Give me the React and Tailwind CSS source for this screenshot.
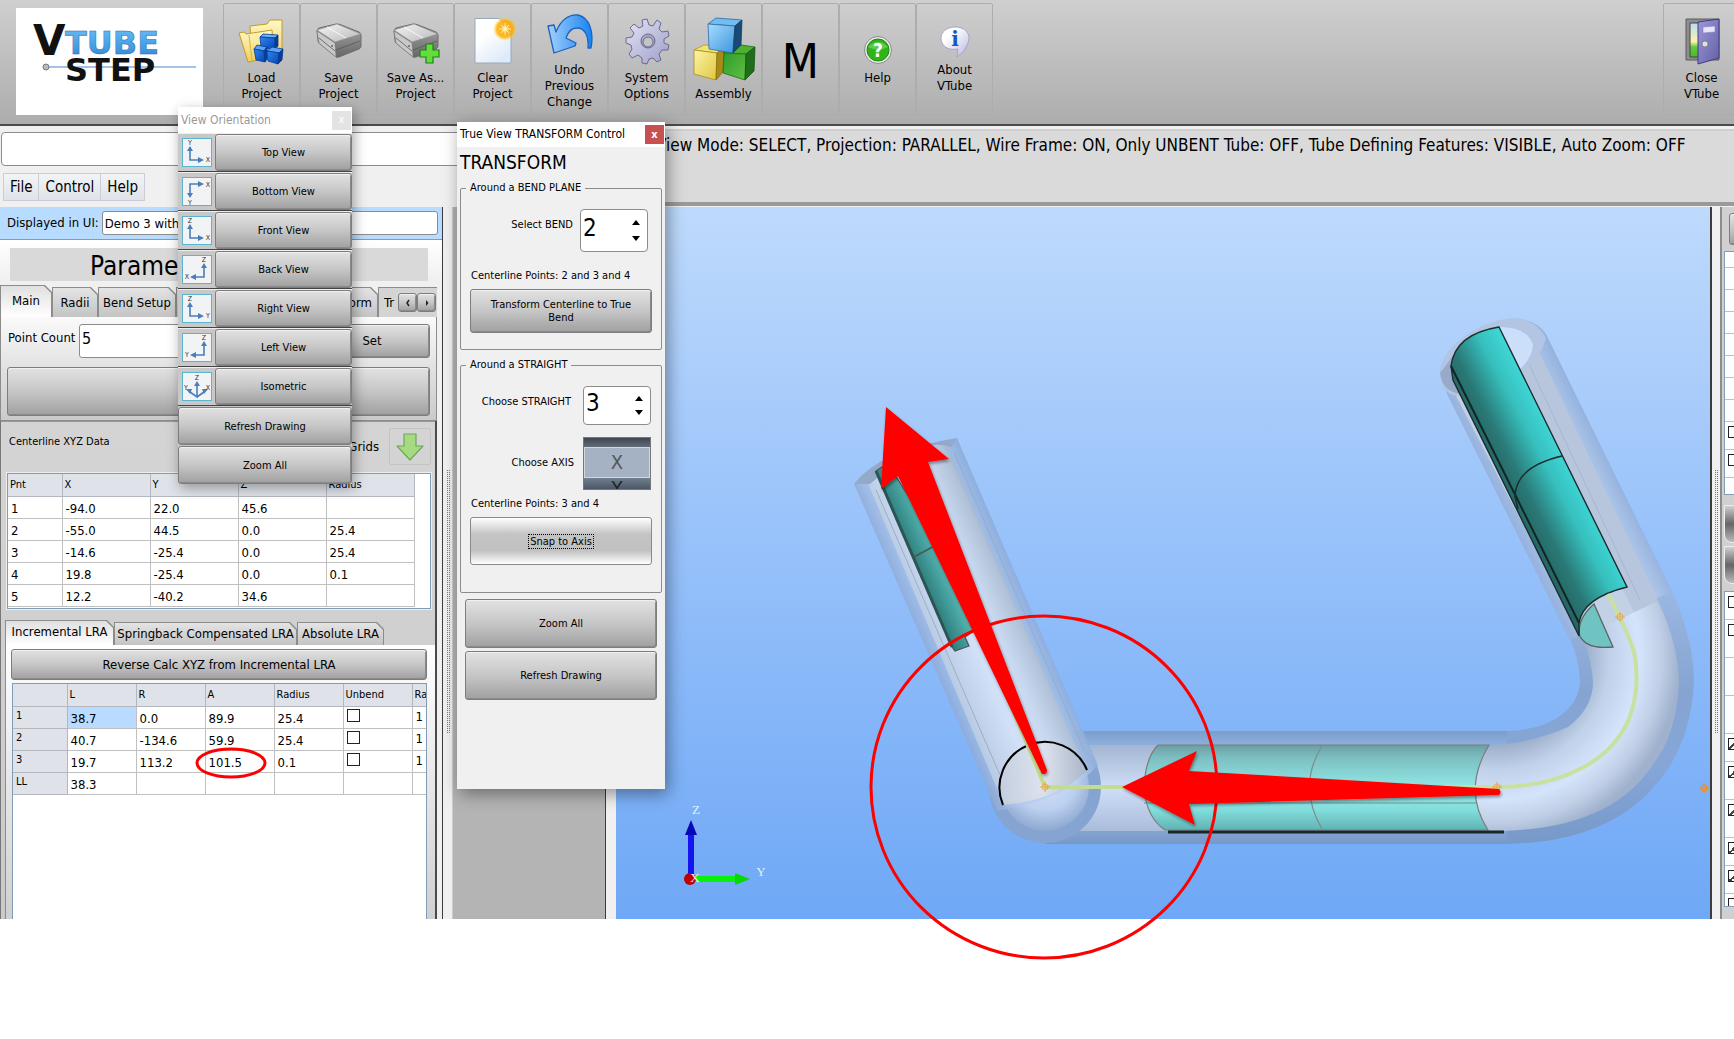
import React, { useState } from "react";

const BUTTON =
  "border border-[#7d7d7d] rounded-[3px] bg-linear-to-b from-[#e2e2e2] via-[#c6c6c6] to-[#a0a0a0] shadow-[inset_0_1px_0_#f0f0f0,inset_-1px_-1px_0_#8a8a8a]";

const xyzRows = [
  ["1", "-94.0", "22.0", "45.6", ""],
  ["2", "-55.0", "44.5", "0.0", "25.4"],
  ["3", "-14.6", "-25.4", "0.0", "25.4"],
  ["4", "19.8", "-25.4", "0.0", "0.1"],
  ["5", "12.2", "-40.2", "34.6", ""],
];

const lraRows = [
  ["1", "38.7", "0.0", "89.9", "25.4"],
  ["2", "40.7", "-134.6", "59.9", "25.4"],
  ["3", "19.7", "113.2", "101.5", "0.1"],
  ["LL", "38.3", "", "", ""],
];

const views = [
  { label: "Top View", corner: "bl", up: "Y", side: "X" },
  { label: "Bottom View", corner: "tl", up: "Y", side: "X" },
  { label: "Front View", corner: "bl", up: "Z", side: "X" },
  { label: "Back View", corner: "br", up: "Z", side: "X" },
  { label: "Right View", corner: "bl", up: "Z", side: "Y" },
  { label: "Left View", corner: "br", up: "Z", side: "Y" },
  { label: "Isometric", corner: "iso" },
];

/* ---------- icons ---------- */

const LoadIcon = () => (
  <svg viewBox="0 0 48 48" className="w-12 h-12" aria-hidden="true">
    <defs>
      <linearGradient id="folder" x1="0" y1="0" x2="0" y2="1">
        <stop offset="0" stopColor="#fff8c8" />
        <stop offset="1" stopColor="#f0cf5a" />
      </linearGradient>
      <linearGradient id="blueCube" x1="0" y1="0" x2="1" y2="1">
        <stop offset="0" stopColor="#2f86f2" />
        <stop offset="1" stopColor="#0546b0" />
      </linearGradient>
    </defs>
    <path d="M12 9 L29 7 L32 3 L44 3 L44 36 L14 42 Z" fill="url(#folder)" stroke="#c39a28" strokeLinejoin="round" />
    <path d="M1 16 L6 15 L8 17 L34 13 L36 40 L10 45 Z" fill="url(#folder)" stroke="#c39a28" strokeLinejoin="round" />
    <path d="M11 18 L14 43" stroke="#d8b440" />
    <g stroke="#063a92" strokeWidth="0.8" strokeLinejoin="round">
      <path d="M22 20 L25 17 L40 18 L37 21 Z" fill="#6fb2fb" />
      <path d="M22 20 L37 21 L37 32 L23 31 Z" fill="url(#blueCube)" />
      <path d="M37 21 L40 18 L40 29 L37 32 Z" fill="#053c9c" />
      <path d="M16 32 L19 28 L29 30 L26 34 Z" fill="#5ba2f6" />
      <path d="M16 32 L26 34 L27 45 L18 43 Z" fill="url(#blueCube)" />
      <path d="M26 34 L29 30 L29 42 L27 45 Z" fill="#053c9c" />
      <path d="M29 34 L34 30 L45 32 L41 36 Z" fill="#5ba2f6" />
      <path d="M29 34 L41 36 L40 47 L30 44 Z" fill="url(#blueCube)" />
      <path d="M41 36 L45 32 L44 43 L40 47 Z" fill="#053c9c" />
    </g>
  </svg>
);

const DriveIcon = ({ plus }) => (
  <svg viewBox="0 0 48 48" className="w-12 h-12" aria-hidden="true">
    <defs>
      <linearGradient id="driveTop" x1="0" y1="0" x2="1" y2="1">
        <stop offset="0" stopColor="#f4f4f4" />
        <stop offset="1" stopColor="#b9b9b9" />
      </linearGradient>
      <linearGradient id="driveSide" x1="0" y1="0" x2="0" y2="1">
        <stop offset="0" stopColor="#a8a8a8" />
        <stop offset="1" stopColor="#666" />
      </linearGradient>
    </defs>
    <path d="M2 14 Q2 12 4 11 L21 7 Q23 7 25 7.5 L44 15 Q46 16 46 18 L46 29 Q46 31 44 32 L24 40 Q21 41 20 39 L4 26 Q3 25 3 23 Z" fill="url(#driveSide)" stroke="#6d6d6d" />
    <path d="M2 13 L22 7 L46 17 L20 25 Z" fill="url(#driveTop)" stroke="#8a8a8a" strokeWidth="0.6" strokeLinejoin="round" />
    <path d="M2 14 L20 26 L21 40 L4 26 Z" fill="#c9c9c9" stroke="#787878" strokeWidth="0.6" strokeLinejoin="round" />
    <path d="M21 33 L45 24 M4 21 L20 34" stroke="#585858" strokeWidth="0.8" fill="none" />
    <path d="M12 10 L31 21" stroke="#fff" strokeWidth="0.8" />
    <circle cx="17" cy="29" r="1" fill="#666" />
    {plus && (
      <path d="M34 27 H41 V33 H47 V40 H41 V46 H34 V40 H28 V33 H34 Z" fill="#64dc3c" stroke="#1c8412" strokeWidth="1.2" />
    )}
  </svg>
);

const ClearIcon = () => (
  <svg viewBox="0 0 48 48" className="w-12 h-12" aria-hidden="true">
    <defs>
      <linearGradient id="sheet" x1="0" y1="0" x2="0.6" y2="1">
        <stop offset="0.4" stopColor="#fff" />
        <stop offset="1" stopColor="#dfeaf8" />
      </linearGradient>
      <radialGradient id="spark">
        <stop offset="0" stopColor="#fff7b0" />
        <stop offset="0.35" stopColor="#ffb41e" />
        <stop offset="0.7" stopColor="#ffa800" stopOpacity="0.8" />
        <stop offset="1" stopColor="#ffe600" stopOpacity="0" />
      </radialGradient>
    </defs>
    <path d="M6 1.5 H30 L42 13 V46 H6 Z" fill="url(#sheet)" stroke="#98a8bc" />
    <circle cx="36" cy="12" r="12" fill="url(#spark)" />
    <path d="M36 6 V18 M30 12 H42 M32 8 L40 16 M40 8 L32 16" stroke="#fff6c8" strokeWidth="0.8" />
  </svg>
);

const UndoIcon = () => (
  <svg viewBox="0 0 48 48" className="w-12 h-12" aria-hidden="true">
    <defs>
      <linearGradient id="undo" x1="0" y1="0" x2="1" y2="0">
        <stop offset="0" stopColor="#a4d0fb" />
        <stop offset="1" stopColor="#1583f2" />
      </linearGradient>
    </defs>
    <path d="M2 17 L8 16 L10 23 C15 10 24 5 32 6 C44 9 48 23 45 39 L42 39 C43 27 39 19 31 19 C26 19 22 23 20 29 L30 34 L29 37 L8 44 Z" fill="url(#undo)" stroke="#1e62bb" strokeWidth="1.3" strokeLinejoin="round" />
  </svg>
);

const GearIcon = () => (
  <svg viewBox="0 0 48 48" className="w-12 h-12" aria-hidden="true">
    <defs>
      <linearGradient id="gear" x1="0" y1="0" x2="1" y2="1">
        <stop offset="0" stopColor="#e4e4f6" />
        <stop offset="1" stopColor="#9d9dc8" />
      </linearGradient>
    </defs>
    <g fill="url(#gear)" stroke="#6a6a92" strokeWidth="1">
      <path
        strokeLinejoin="round"
        d="M20 9 L19 3 L24 2 L26 8 L30 9 L34 3 L38 6 L36 12 L39 15 L45 14 L46 19 L41 22 L41 26 L46 28 L45 33 L39 33 L36 37 L38 43 L34 45 L30 41 L26 42 L24 47 L19 46 L19 41 L15 38 L9 41 L6 37 L9 32 L8 28 L3 26 L3 21 L9 20 L11 16 L7 11 L11 7 L16 11 Z"
      />
      <circle cx="25" cy="24" r="7" fill="#a9a9c2" />
      <circle cx="25" cy="25" r="5" fill="#c4c4c4" />
    </g>
  </svg>
);

const AssemblyIcon = () => (
  <svg viewBox="0 0 64 64" className="w-16 h-16" aria-hidden="true">
    <defs>
      <linearGradient id="asmBlue" x1="0" y1="0" x2="1" y2="1">
        <stop offset="0" stopColor="#a8dcff" />
        <stop offset="1" stopColor="#3b95dd" />
      </linearGradient>
      <linearGradient id="asmYellow" x1="0" y1="0" x2="1" y2="1">
        <stop offset="0" stopColor="#fdf4a8" />
        <stop offset="1" stopColor="#e0c63e" />
      </linearGradient>
      <linearGradient id="asmGreen" x1="0" y1="0" x2="1" y2="1">
        <stop offset="0" stopColor="#2e9c2c" />
        <stop offset="1" stopColor="#62c042" />
      </linearGradient>
    </defs>
    <g strokeLinejoin="round" strokeWidth="0.8">
      <path d="M2 33 L12 28 L32 29 L25 36 Z" fill="#f4e46c" stroke="#b0952a" />
      <path d="M2 33 L25 36 L24 63 L2 57 Z" fill="url(#asmYellow)" stroke="#a98c22" />
      <path d="M25 36 L32 29 L31 55 L24 63 Z" fill="#a88a18" stroke="#8a7010" />
      <path d="M31 36 L42 27 L63 30 L54 37 Z" fill="#4fae34" stroke="#1e6e18" />
      <path d="M32 36 L54 37 L53 63 L31 56 Z" fill="url(#asmGreen)" stroke="#1e6e18" />
      <path d="M54 37 L63 30 L62 54 L53 63 Z" fill="#1f6e1a" stroke="#165412" />
      <path d="M16 7 L24 1 L50 3 L43 9 Z" fill="#74bdf2" stroke="#276ca6" />
      <path d="M16 7 L43 9 L41 36 L17 32 Z" fill="url(#asmBlue)" stroke="#276ca6" />
      <path d="M43 9 L50 3 L49 28 L41 36 Z" fill="#174b76" stroke="#123e62" />
    </g>
  </svg>
);

const HelpIcon = () => (
  <svg viewBox="0 0 32 32" className="w-8 h-8" aria-hidden="true">
    <circle cx="16" cy="17" r="13.5" fill="#e8e8e8" stroke="#8c8c8c" />
    <circle cx="16" cy="17" r="11" fill="#2fb51a" stroke="#1b8c0c" />
    <path d="M6 14 Q16 4 26 14 Q16 19 6 14" fill="#7fdc6a" opacity="0.6" />
    <text x="16" y="24" textAnchor="middle" fontSize="19" fontWeight="700" fill="#fff">?</text>
  </svg>
);

const AboutIcon = () => (
  <svg viewBox="0 0 32 32" className="w-8 h-8" aria-hidden="true">
    <defs>
      <linearGradient id="bubble" x1="0" y1="0" x2="1" y2="1">
        <stop offset="0.3" stopColor="#fff" />
        <stop offset="1" stopColor="#b6b6e2" />
      </linearGradient>
    </defs>
    <path d="M16 2 C25 2 30 7 30 13 C30 18 27 22 25 26 L18 32 L19 24 C8 26 2 20 2 13 C2 7 8 2 16 2 Z" fill="url(#bubble)" stroke="#9c9cc0" strokeWidth="0.8" />
    <text x="16" y="21" textAnchor="middle" fontSize="20" fontWeight="700" fill="#1457c8" fontFamily="DejaVu Serif">i</text>
  </svg>
);

const DoorIcon = () => (
  <svg viewBox="0 0 48 48" className="w-12 h-12" aria-hidden="true">
    <defs>
      <linearGradient id="sky" x1="0" y1="0" x2="0" y2="1">
        <stop offset="0" stopColor="#b6dcfa" />
        <stop offset="0.55" stopColor="#fff3a8" />
        <stop offset="0.7" stopColor="#62cc3c" />
        <stop offset="1" stopColor="#48b82a" />
      </linearGradient>
      <linearGradient id="door" x1="0" y1="0" x2="1" y2="1">
        <stop offset="0" stopColor="#9c98d8" />
        <stop offset="1" stopColor="#6460a6" />
      </linearGradient>
    </defs>
    <path d="M8 2 H41 V43 H8 Z" fill="#8d8d8d" stroke="#5c5c5c" />
    <path d="M12 6 H24 V40 H12 Z" fill="url(#sky)" stroke="#444" />
    <path d="M20 5 L41 2 V41 L20 47 Z" fill="url(#door)" stroke="#403c80" />
    <path d="M25 10 L37 9 V15 L25 16 Z" fill="#e6e6fb" stroke="#8480c0" strokeWidth="0.6" />
    <circle cx="27" cy="27" r="3" fill="#e0e0e0" stroke="#77767c" strokeWidth="0.8" />
  </svg>
);

const ViewIcon = ({ corner, up, side }) => (
  <svg viewBox="0 0 30 29" className="w-[30px] h-[29px]" aria-hidden="true">
    <rect x="0.5" y="0.5" width="29" height="28" fill="#f2f3f5" stroke="#5ab3cf" />
    <g stroke="#4a7ebb" strokeWidth="1.6" fill="none">
      {corner === "bl" && <path d="M8 11 V22 H18" />}
      {corner === "tl" && <path d="M8 17 V7 H18" />}
      {corner === "br" && <path d="M22 11 V22 H12" />}
      {corner === "iso" && <path d="M15 13 V25 L8 20 M15 25 L22 20" />}
    </g>
    <g fill="#4a7ebb">
      {corner === "bl" && <path d="M8 8 L5 13 H11 Z M22 22 L16 19 V25 Z" />}
      {corner === "tl" && <path d="M8 21 L5 16 H11 Z M22 7 L16 4 V10 Z" />}
      {corner === "br" && <path d="M22 8 L19 13 H25 Z M8 22 L14 19 V25 Z" />}
      {corner === "iso" && <path d="M15 9 L12 14 H18 Z M4 17 L10 17 L8 22 Z M26 17 L20 17 L22 22 Z" />}
    </g>
    <g fontSize="7" fill="#333" textAnchor="middle">
      {corner === "bl" && <><text x="8" y="7">{up}</text><text x="26" y="24">{side}</text></>}
      {corner === "tl" && <><text x="8" y="28">{up}</text><text x="26" y="10">{side}</text></>}
      {corner === "br" && <><text x="22" y="7">{up}</text><text x="5" y="24">{side}</text></>}
      {corner === "iso" && <><text x="15" y="8">Z</text><text x="4" y="18">Y</text><text x="26" y="18">X</text></>}
    </g>
  </svg>
);

const Target = ({ x, y, faded }) => (
  <g transform={`translate(${x} ${y})`} stroke="#ff8a10" strokeWidth="1.2" fill="none" opacity={faded ? 0.6 : 1}>
    <circle r="3" />
    <path d="M-5 0 H5 M0 -5 V5" />
  </g>
);

/* ---------- toolbar ---------- */

const tools = [
  { Icon: LoadIcon, lines: ["Load", "Project"] },
  { Icon: DriveIcon, lines: ["Save", "Project"] },
  { Icon: () => <DriveIcon plus />, lines: ["Save As...", "Project"] },
  { Icon: ClearIcon, lines: ["Clear", "Project"] },
  { Icon: UndoIcon, lines: ["Undo", "Previous", "Change"] },
  { Icon: GearIcon, lines: ["System", "Options"] },
  { Icon: AssemblyIcon, lines: ["Assembly"] },
  { lines: ["M"], big: true },
  { Icon: HelpIcon, lines: ["Help"] },
  { Icon: AboutIcon, lines: ["About", "VTube"] },
  { Icon: DoorIcon, lines: ["Close", "VTube"], last: true },
];

const ToolButton = ({ Icon, lines, big, last }) => (
  <button
    className={`w-[77px] h-28 shrink-0 flex flex-col items-center justify-center gap-[5px] border border-[#adadad] rounded-[2px] ${
      last ? "ml-auto -mr-[6px]" : ""
    }`}
  >
    {Icon && <Icon />}
    <span className={big ? "pt-1 text-5xl" : "text-[13px] leading-4"}>
      {lines.map((line) => (
        <span key={line} className="block">{line}</span>
      ))}
    </span>
  </button>
);

const Toolbar = () => (
  <header className="flex items-start h-[126px] pt-[3px] pl-4 overflow-hidden bg-linear-to-b from-[#cfcfcf] to-[#adadad] border-b-2 border-[#4a4a4a]">
    <div className="w-[187px] h-[107px] mt-[5px] mr-5 shrink-0 bg-white">
      <svg viewBox="16 8 187 107" className="w-full h-full" role="img" aria-label="VTube Step">
        <defs>
          <linearGradient id="logoBlue" x1="0" y1="0" x2="0" y2="1">
            <stop offset="0" stopColor="#6fc0f8" />
            <stop offset="1" stopColor="#2a86d2" />
          </linearGradient>
        </defs>
        <path d="M47 67 H196" stroke="#4a86c8" />
        <circle cx="46" cy="67" r="3" fill="#bbb" stroke="#777" />
        <g fontFamily="DejaVu Sans" fontWeight="700">
          <text x="33" y="55" fontSize="42" fill="#111">V</text>
          <text x="65" y="54" fontSize="32" fill="url(#logoBlue)" stroke="#2a6aa8" strokeWidth="0.5">TUBE</text>
          <text x="65" y="81" fontSize="32" fill="#111">STEP</text>
        </g>
      </svg>
    </div>
    {tools.map((tool) => (
      <ToolButton key={tool.lines.join(" ")} {...tool} />
    ))}
  </header>
);

/* ---------- left panel ---------- */

const CUT = "[clip-path:polygon(0_0,calc(100%-7px)_0,100%_7px,100%_100%,0_100%)]";

const Tab = ({ label, active, className = "" }) => (
  <button
    role="tab"
    aria-selected={!!active}
    className={`bg-[#8c8c8c] pt-px px-px shrink-0 ${CUT} ${active ? "" : "mt-[2px]"} ${className}`}
  >
    <span
      className={`flex h-full items-center justify-center whitespace-nowrap ${CUT} ${
        active ? "pb-[2px] bg-linear-to-b from-[#e0e0e0] to-white" : "bg-linear-to-b from-[#e4e4e4] to-[#c4c4c4]"
      }`}
    >
      {label}
    </span>
  </button>
);

const XyzTable = () => (
  <div className="ml-[5px] mr-1 mt-2 h-[136px] border border-[#7f9db9] bg-white shadow-[0_0_0_1px_#eee]">
    <table className="table-fixed w-[406px] border-collapse">
      <thead>
        <tr className="h-[22px] bg-[#dfe3e9] text-[11px] text-left">
          <th className="w-[54px] font-normal border-r border-b border-[#b4b8be] pl-[2px]">Pnt</th>
          {["X", "Y", "Z", "Radius"].map((name) => (
            <th key={name} className="w-22 font-normal border-r border-b border-[#b4b8be] pl-[2px]">{name}</th>
          ))}
        </tr>
      </thead>
      <tbody>
        {xyzRows.map((row) => (
          <tr key={row[0]} className="h-[22px]">
            {row.map((value, i) => (
              <td key={i} className="border-r border-b border-[#c0c0c0] pl-[3px] pt-[2px] leading-[19px]">{value}</td>
            ))}
          </tr>
        ))}
      </tbody>
    </table>
  </div>
);

const LraTable = () => (
  <div className="flex-1 mt-[3px] ml-[6px] mr-2 border-x border-t border-[#7f9db9] bg-white overflow-hidden">
    <table className="table-fixed w-[468px] border-collapse">
      <thead>
        <tr className="h-[22px] bg-[#dfe3e9] text-[11px] text-left">
          <th className="w-[54px] border-r border-b border-[#b4b8be]"></th>
          {["L", "R", "A", "Radius", "Unbend", "Ratio"].map((name) => (
            <th key={name} className="w-[69px] font-normal border-r border-b border-[#b4b8be] pl-[2px]">{name}</th>
          ))}
        </tr>
      </thead>
      <tbody>
        {lraRows.map(([name, ...values], r) => (
          <tr key={name} className="h-[22px]">
            <th className="bg-[#dfe3e9] text-[11px] text-left font-normal border-r border-b border-[#b4b8be] pl-[3px] pb-[2px] leading-4">{name}</th>
            {values.map((value, i) => (
              <td
                key={i}
                className={`relative border-r border-b border-[#c0c0c0] pl-[3px] pt-[2px] leading-[19px] ${r === 0 && i === 0 ? "bg-[#b8dbff]" : ""}`}
              >
                {value}
                {value === "101.5" && (
                  <svg viewBox="0 0 72 32" className="absolute -left-[10px] -top-[4px] w-[72px] h-8 overflow-visible" aria-hidden="true">
                    <ellipse cx="35" cy="16" rx="34" ry="14" fill="none" stroke="#f00" strokeWidth="3" />
                  </svg>
                )}
              </td>
            ))}
            <td className="border-r border-b border-[#c0c0c0] pl-[3px] pb-[3px]">
              {name !== "LL" && (
                <input type="checkbox" aria-label={`Unbend ${name}`} className="block appearance-none w-[13px] h-[13px] border border-[#222] bg-white" />
              )}
            </td>
            <td className="border-r border-b border-[#c0c0c0] pl-[3px]">{name !== "LL" ? "1" : ""}</td>
          </tr>
        ))}
      </tbody>
    </table>
  </div>
);

const LeftPanel = () => (
  <section className="w-[443px] shrink-0 flex flex-col border-r border-[#3c3c3c] bg-[#f0f0f0]">
    <div className="flex items-center h-[33px] pl-[7px] pr-1 gap-[3px] bg-[#b8dcff] border-b border-[#8a9aaa]">
      <label htmlFor="displayed" className="whitespace-nowrap text-[13px]">Displayed in UI:</label>
      <input
        id="displayed"
        defaultValue="Demo 3 with"
        className="flex-1 min-w-0 h-6 px-[2px] bg-white border border-[#8c8c8c] rounded-[3px]"
      />
    </div>
    <div className="bg-linear-to-b from-white to-[#f0f0f0] pt-2 pl-[10px] pr-[14px]">
      <h1 className="h-[33px] pl-20 text-[26px] leading-9 bg-[#d9d9d9]">Parameters</h1>
    </div>

    <div role="tablist" className="flex h-8 mt-1 mr-[5px] overflow-hidden bg-[#f0f0f0]">
      <Tab label="Main" active className="w-[52px]" />
      <Tab label="Radii" className="w-[46px]" />
      <Tab label="Bend Setup" className="w-[78px]" />
      <Tab label="Bend Data" className="w-[90px]" />
      <Tab label="Transform" className="w-[112px] [&>span]:justify-end [&>span]:pr-[5px]" />
      <div className="flex-1 flex items-center mt-[2px] pl-[5px] bg-[#d4d4d4] border-t border-l border-[#8c8c8c]">
        <span className="w-[14px] overflow-hidden">Tr</span>
        <button aria-label="Scroll left" className={`w-[19px] h-[19px] flex items-center justify-center ${BUTTON}`}>
          <svg viewBox="0 0 8 8" className="w-2 h-2"><path d="M5 1 L3 4 L5 7" fill="none" stroke="#222" strokeWidth="1.5" /></svg>
        </button>
        <button aria-label="Scroll right" className={`w-[19px] h-[19px] flex items-center justify-center ${BUTTON}`}>
          <svg viewBox="0 0 8 8" className="w-2 h-2"><path d="M3 1 L5.5 4 L3 7 Z" fill="#222" /></svg>
        </button>
      </div>
    </div>
    <div className="mr-[5px] border border-t-0 border-[#8c8c8c] pt-[7px] pb-1 px-[6px] bg-linear-to-b from-[#fafafa] to-[#cacaca]">
      <div className="flex items-center">
        <label htmlFor="points" className="w-[72px] pl-px pb-[6px] text-[13px] whitespace-nowrap">Point Count</label>
        <input id="points" defaultValue="5" className="w-[220px] h-[34px] pl-[2px] pb-[5px] text-base bg-white border border-[#8c8c8c] rounded-[3px]" />
        <button className={`ml-auto w-[116px] h-[34px] text-[13px] ${BUTTON}`}>Set</button>
      </div>
      <button aria-label="Apply" className={`block mt-[9px] w-full h-[49px] ${BUTTON}`}></button>
    </div>

    <div className="flex-1 flex flex-col border-l border-[#777] mr-[5px] border-r-2 border-r-[#4a4a4a] bg-linear-to-b from-[#d4d4d4] to-[#cacaca] min-h-0">
      <div className="flex-none border-t border-[#999] pl-px">
        <div className="flex items-center justify-between pt-[6px] pl-[7px] pr-1">
          <span className="pb-2 text-[11px]">Centerline XYZ Data</span>
          <div className="flex items-center gap-[10px] text-[13px]">
            <span>Grids</span>
            <button aria-label="Export grids" className="w-[42px] h-[37px] flex items-center justify-center border border-[#c4c4c4] rounded-[2px]">
              <svg viewBox="0 0 28 28" className="w-7 h-7">
                <path d="M8 1 H20 V13 H27 L14 27 L1 13 H8 Z" fill="#a5d982" stroke="#6fa75a" strokeWidth="1.2" strokeLinejoin="round" />
              </svg>
            </button>
          </div>
        </div>
        <XyzTable />
      </div>

      <div role="tablist" className="flex-none flex h-[25px] mt-[11px] ml-1 text-[13px]">
        <Tab label="Incremental LRA" active className="w-[109px]" />
        <Tab label="Springback Compensated LRA" className="w-[183px]" />
        <Tab label="Absolute LRA" className="w-[87px]" />
      </div>
      <div className="flex-1 flex flex-col ml-1 pt-1 border-l border-[#8c8c8c] bg-linear-to-b from-white to-[#d0d0d0] min-h-0">
        <button className={`ml-[5px] mr-2 h-[31px] ${BUTTON}`}>Reverse Calc XYZ from Incremental LRA</button>
        <LraTable />
      </div>
    </div>
  </section>
);

/* ---------- 3D view ---------- */

const TubeScene = () => (
  <svg viewBox="616 207 1094 712" className="block w-full overflow-visible" role="img" aria-label="Tube model">
    <defs>
      <linearGradient id="bg" x1="0" y1="0" x2="0" y2="1">
        <stop offset="0" stopColor="#bedafc" />
        <stop offset="0.5" stopColor="#95c0fa" />
        <stop offset="1" stopColor="#6fa8f6" />
      </linearGradient>
      <linearGradient id="legOuter" gradientUnits="userSpaceOnUse" x1="922" y1="640" x2="1030" y2="592">
        <stop offset="0" stopColor="#8fabd8" />
        <stop offset="0.2" stopColor="#b3cbef" />
        <stop offset="0.7" stopColor="#bcd2f0" />
        <stop offset="1" stopColor="#84a4d6" />
      </linearGradient>
      <linearGradient id="legInner" gradientUnits="userSpaceOnUse" x1="920" y1="640" x2="1018" y2="597">
        <stop offset="0" stopColor="#b4c5dd" />
        <stop offset="0.45" stopColor="#d5e3f8" />
        <stop offset="0.7" stopColor="#cbdaf0" />
        <stop offset="0.92" stopColor="#b2c1d6" />
        <stop offset="1" stopColor="#9aabc4" />
      </linearGradient>
      <linearGradient id="flatOuter" gradientUnits="userSpaceOnUse" x1="0" y1="731" x2="0" y2="844">
        <stop offset="0" stopColor="#7a9dcc" />
        <stop offset="0.15" stopColor="#92b3e2" />
        <stop offset="0.6" stopColor="#a4bfe6" />
        <stop offset="1" stopColor="#7799c8" />
      </linearGradient>
      <linearGradient id="bendOuter" gradientUnits="userSpaceOnUse" x1="0" y1="590" x2="0" y2="844">
        <stop offset="0" stopColor="#9bb7e2" />
        <stop offset="0.4" stopColor="#86a4d2" />
        <stop offset="0.7" stopColor="#85a6d8" />
        <stop offset="1" stopColor="#7799c8" />
      </linearGradient>
      <linearGradient id="flatInner" gradientUnits="userSpaceOnUse" x1="0" y1="745" x2="0" y2="831">
        <stop offset="0" stopColor="#a3b5d1" />
        <stop offset="0.5" stopColor="#cfdff8" />
        <stop offset="1" stopColor="#a9bcda" />
      </linearGradient>
      <linearGradient id="rightOuter" gradientUnits="userSpaceOnUse" x1="1500" y1="505" x2="1605" y2="452">
        <stop offset="0" stopColor="#93b0dc" />
        <stop offset="0.2" stopColor="#abc4e8" />
        <stop offset="0.8" stopColor="#b3c9e8" />
        <stop offset="1" stopColor="#94b2df" />
      </linearGradient>
      <radialGradient id="bend" gradientUnits="userSpaceOnUse" cx="1496" cy="656" r="184">
        <stop offset="0.48" stopColor="#9baec9" />
        <stop offset="0.62" stopColor="#c1d1ea" />
        <stop offset="0.78" stopColor="#d4e4fb" />
        <stop offset="0.9" stopColor="#c0cfe6" />
        <stop offset="1" stopColor="#9fb1cd" />
      </radialGradient>
      <linearGradient id="tealBig" gradientUnits="userSpaceOnUse" x1="1508" y1="492" x2="1570" y2="460">
        <stop offset="0" stopColor="#236866" />
        <stop offset="0.25" stopColor="#2a7a77" />
        <stop offset="0.65" stopColor="#36bfbd" />
        <stop offset="1" stopColor="#40dada" />
      </linearGradient>
      <linearGradient id="tealFlat" gradientUnits="userSpaceOnUse" x1="0" y1="745" x2="0" y2="831">
        <stop offset="0" stopColor="#6c9ea2" />
        <stop offset="0.15" stopColor="#7cbfc2" />
        <stop offset="0.5" stopColor="#92e8e6" />
        <stop offset="0.75" stopColor="#82dedc" />
        <stop offset="1" stopColor="#5fb1b1" />
      </linearGradient>
      <linearGradient id="tealLeg" gradientUnits="userSpaceOnUse" x1="914" y1="560" x2="945" y2="546">
        <stop offset="0" stopColor="#2f7f7d" />
        <stop offset="1" stopColor="#63cbc7" />
      </linearGradient>
      <radialGradient id="ball" cx="0.5" cy="0.4" r="0.6">
        <stop offset="0" stopColor="#d5e3f8" />
        <stop offset="0.6" stopColor="#bcd0f0" />
        <stop offset="1" stopColor="#8ea8d0" />
      </radialGradient>
      <linearGradient id="cap" x1="0" y1="0" x2="1" y2="0">
        <stop offset="0" stopColor="#c4cedd" />
        <stop offset="0.5" stopColor="#dfe3ec" />
        <stop offset="1" stopColor="#a9b3c4" />
      </linearGradient>
      <filter id="shade" x="-10%" y="-10%" width="120%" height="120%">
        <feDropShadow dx="1" dy="2" stdDeviation="1.5" floodOpacity="0.4" />
      </filter>
    </defs>
    <rect x="616" y="207" width="1094" height="712" fill="url(#bg)" />

    {/* outer skin: straight, bend and right leg */}
    <path d="M1045 731 H1508 V844 H1045 Z" fill="url(#flatOuter)" />
    <path
      d="M1507 731 Q1545 730 1565 712 Q1580 698 1580 680 Q1578 655 1570 639 L1672 591 Q1694 640 1694 683 Q1690 745 1658 782 Q1610 842 1507 844 Z"
      fill="url(#bendOuter)"
    />
    <path d="M1447 394 L1440 373 Q1442 350 1470 333 Q1490 320 1513 318 Q1536 319 1546 334 L1672 591 L1570 640 Z" fill="url(#rightOuter)" />

    {/* inner skin */}
    <path d="M1045 745 H1490 V831 H1045 Z" fill="url(#flatInner)" />
    <path d="M1453 390 L1533 340 L1658 602 L1584 641 Z" fill="#c3d1e7" />
    <path d="M1533 340 L1658 602 L1634 612 L1512 372 Z" fill="#b7c6dc" />
    <path
      d="M1488 745 Q1530 744 1568 727 Q1593 708 1593 682 Q1592 660 1582 637 L1658 601 Q1679 645 1679 684 Q1676 735 1654 763 Q1612 829 1500 831 L1488 831 Q1462 788 1488 745 Z"
      fill="url(#bend)"
    />
    <path d="M1528 362 L1640 600 M1518 370 L1628 588" stroke="#a4b3ca" strokeWidth="0.8" />

    {/* open end, right leg */}
    <path d="M1440 373 Q1442 350 1470 333 Q1490 320 1513 318 Q1536 319 1546 338 Q1540 365 1500 385 Q1455 405 1443 388 Z" fill="#b2c5e2" />
    <path d="M1451 373 Q1455 345 1499 327 Q1528 327 1533 345 Q1532 362 1512 375 Q1470 400 1451 373 Z" fill="#cbdefa" />
    <path d="M1440 373 Q1442 392 1462 394 L1452 372 L1456 352 Z" fill="#97aacb" />
    <path d="M1594 604 L1613 647 Q1585 650 1579 634 Q1578 618 1594 604 Z" fill="#6fc4c2" stroke="#5c6464" strokeWidth="1.3" />
    <path d="M1499 327 L1627 587 Q1583 598 1579 623 L1579 636 L1453 380 L1451 366 Q1455 334 1499 327 Z" fill="url(#tealBig)" stroke="#1d2b2b" strokeWidth="1.4" />
    <path d="M1451 366 L1579 623" stroke="#142424" strokeWidth="2" />
    <path d="M1562 456 Q1515 467 1515 497 L1518 509" fill="none" stroke="#1d2b2b" strokeWidth="1.4" />

    {/* cut section, straight */}
    <path d="M1158 745 H1489 Q1462 790 1488 830 H1165 Q1147 818 1144 789 Q1145 758 1158 745 Z" fill="url(#tealFlat)" stroke="#7c7c7c" strokeWidth="1.2" />
    <path d="M1144 803 H1476 M1322 746 Q1297 786 1322 829" stroke="#7d8c8c" strokeWidth="1.2" fill="none" />
    <path d="M1168 832 H1504" stroke="#182828" strokeWidth="3" />

    {/* centerline */}
    <path
      d="M1045 787 H1499 Q1546 787 1582 768 Q1616 750 1629 719 Q1641 688 1634 652 Q1628 632 1608 594"
      fill="none"
      stroke="#c8e0a0"
      strokeWidth="4"
    />

    {/* left leg and the ball joint */}
    <circle cx="1045" cy="787" r="56" fill="#85a4d2" />
    <circle cx="1045" cy="787" r="44" fill="url(#ball)" />
    <path d="M854 484 Q885 455 957 438 L1098 765 Q1070 798 997 811 Z" fill="url(#legOuter)" opacity="0.85" />
    <path d="M867 481 Q895 456 946 444 L1082 760 Q1060 795 1003 803 Z" fill="url(#legInner)" opacity="0.9" />
    <path d="M854 484 Q880 450 957 438 L951 447 Q930 440 905 455 L870 484 Z" fill="#93a9c8" />
    <path d="M876 490 L1000 775 M954 452 L1084 750" stroke="#9aa9bf" strokeWidth="0.9" />
    <path d="M876 471 L882 467 L895 475 L988 621 L965 637 L969 646 L955 651 L952 647 Z" fill="url(#tealLeg)" stroke="#4b5555" strokeWidth="1.2" />
    <path d="M876 471 L952 647" stroke="#2c5454" strokeWidth="3" />
    <path d="M914 557 L936 545 M970 590 L988 622" stroke="#4b5555" strokeWidth="1.5" />
    <path d="M1003 805 A44 44 0 1 1 1087 770 Q1060 800 1003 805 Z" fill="url(#cap)" opacity="0.85" />
    <path d="M1003 805 A44 44 0 1 1 1087 770" fill="none" stroke="#000" strokeWidth="2" />
    <path d="M1045 787 L1005 691 M1045 787 H1122" stroke="#c4dc90" strokeWidth="4" />
    <Target x={1045} y={787} faded />
    <Target x={1497} y={787} faded />
    <Target x={1620} y={617} faded />
    <Target x={1704} y={788} />

    {/* axis triad */}
    <rect x="688" y="834" width="6" height="42" fill="#1414ee" />
    <path d="M691 820 L697 835 H685 Z" fill="#0808b8" />
    <rect x="694" y="876" width="42" height="6" fill="#0af00a" />
    <path d="M750 879 L735 873 V885 Z" fill="#08d808" />
    <circle cx="690" cy="879" r="6" fill="#c00000" />
    <g fontSize="13" fill="#e6f0ff" textAnchor="middle" fontFamily="Liberation Serif">
      <text x="696" y="814">Z</text>
      <text x="761" y="876">Y</text>
      <text x="695" y="882">X</text>
    </g>

    {/* markup */}
    <ellipse cx="1044" cy="787" rx="173" ry="171" fill="none" stroke="#f00" strokeWidth="3" />
    <g fill="#f00" filter="url(#shade)">
      <path d="M886 407 L949 459 L928 462 L1047 770 Q1047 774 1044 774 Q1041 774 1041 772 L898 476 L881 489 Z" />
      <path d="M1122 787 L1197 751 L1189 771 L1499 789 Q1502 792 1499 795 L1189 804 L1195 825 Z" />
    </g>
  </svg>
);

/* ---------- right edge panel ---------- */

const EdgeCheck = ({ checked, label }) => (
  <input
    type="checkbox"
    aria-label={label}
    defaultChecked={checked}
    className="block shrink-0 ml-[3px] mt-1 appearance-none w-3 h-3 border border-[#222] bg-white checked:bg-[linear-gradient(135deg,#fff_45%,#444_45%,#444_60%,#fff_60%)]"
  />
);

const topEdgeRows = [
  ["h-4"], ["h-[22px]"], ["h-[22px]"], ["h-[22px]"], ["h-[22px]"], ["h-[22px]"], ["h-[22px]"], ["h-[22px]"],
  ["h-7", false], ["h-7", false], ["h-4"],
];
const bottomEdgeRows = [
  ["h-7", false], ["h-[38px]", false], ["h-[38px]"], ["h-[38px]"], ["h-7", true], ["h-[38px]", true],
  ["h-[38px]", true], ["h-7", true], ["h-7", true], ["h-3", false],
];

const EdgeList = ({ rows, name }) => (
  <div className="border-l border-y border-[#7f9db9] bg-white overflow-hidden">
    {rows.map(([height, check], i) => (
      <div key={i} className={`flex items-start overflow-hidden border-b border-[#c0c0c0] last:border-0 ${height}`}>
        {check !== undefined && <EdgeCheck checked={check} label={`${name} option ${i + 1}`} />}
      </div>
    ))}
  </div>
);

const EDGE_KNOB = "block w-8 h-[38px] rounded-bl-lg border border-[#eee] bg-linear-to-b from-[#d0d0d0] via-[#666] to-[#bbb]";

const RightEdge = () => (
  <aside className="w-[14px] shrink-0 pl-[2px] border-l-2 border-[#8c8c8c] bg-[#d0d0d0] overflow-hidden">
    <button aria-label="Options" className={`block ml-[5px] my-[6px] w-8 h-8 ${BUTTON}`}></button>
    <EdgeList rows={topEdgeRows} name="Upper" />
    <button aria-label="Up" className={`mt-[10px] ${EDGE_KNOB}`}></button>
    <button aria-label="Down" className={`mt-[3px] mb-[7px] ${EDGE_KNOB}`}></button>
    <EdgeList rows={bottomEdgeRows} name="Lower" />
  </aside>
);

/* ---------- floating windows ---------- */

const ViewOrientation = () => (
  <section className="absolute left-[178px] top-[107px] w-[174px] text-[11px] bg-[#c8c8c8] shadow-[2px_4px_12px_rgba(0,0,0,0.35)]">
    <div className="flex items-center justify-between h-[26px] pl-[3px] pr-px bg-white">
      <h2 className="text-[12px] text-[#999]">View Orientation</h2>
      <button aria-label="Close" className="w-[19px] h-[19px] bg-[#e3e3e3] leading-4 text-white">x</button>
    </div>
    {views.map((view) => (
      <div key={view.label} className="flex items-center h-[39px] pl-1 gap-[3px] border-t border-t-[#eee] border-b border-b-[#444]">
        <ViewIcon {...view} />
        <button className={`flex-1 h-[37px] pt-[2px] ${BUTTON}`}>{view.label}</button>
      </div>
    ))}
    <button className={`block mt-px w-full h-[38px] pt-[2px] ${BUTTON}`}>Refresh Drawing</button>
    <button className={`block mt-px w-full h-[38px] pt-[2px] ${BUTTON}`}>Zoom All</button>
  </section>
);

const Spinner = ({ id, initial, className }) => {
  const [value, setValue] = useState(initial);
  return (
    <div className={`flex bg-white border border-[#8c8c8c] rounded-[4px] overflow-hidden ${className}`}>
      <input
        id={id}
        type="number"
        value={value}
        onChange={(e) => setValue(Number(e.target.value))}
        className="flex-1 min-w-0 pl-[2px] pb-[6px] text-2xl bg-transparent [appearance:textfield] [&::-webkit-inner-spin-button]:appearance-none"
      />
      <div className="w-[22px] flex flex-col justify-evenly items-center">
        <button aria-label="Increase" onClick={() => setValue(value + 1)}>
          <svg viewBox="0 0 8 5" className="w-2 h-[5px]"><path d="M4 0 L8 5 H0 Z" /></svg>
        </button>
        <button aria-label="Decrease" onClick={() => setValue(value - 1)}>
          <svg viewBox="0 0 8 5" className="w-2 h-[5px]"><path d="M0 0 H8 L4 5 Z" /></svg>
        </button>
      </div>
    </div>
  );
};

const TransformControl = () => (
  <section className="absolute left-[457px] top-[121px] w-[208px] pb-[89px] text-[11px] bg-[#f0f0f0] border-t border-[#6fa8e6] shadow-[3px_5px_16px_rgba(0,0,0,0.4)]">
    <div className="flex items-center justify-between h-[25px] pl-[3px] pr-px bg-white">
      <h2 className="pb-px text-[12px]">True View TRANSFORM Control</h2>
      <button aria-label="Close" className="w-[19px] h-[19px] bg-[#c75050] text-white font-bold leading-4">x</button>
    </div>
    <h3 className="pl-[3px] pt-[3px] text-[19px] leading-6">TRANSFORM</h3>

    <fieldset className="mx-[3px] mt-[6px] border border-[#8c8c8c] rounded-[2px] pb-4 px-[9px]">
      <legend className="px-1 -ml-1 leading-4">Around a BEND PLANE</legend>
      <div className="flex justify-end gap-[7px] pr-1 pt-[13px]">
        <label htmlFor="bend" className="pt-2 leading-4">Select BEND</label>
        <Spinner id="bend" initial={2} className="w-[68px] h-[43px]" />
      </div>
      <p className="mt-4 pl-px leading-4">Centerline Points: 2 and 3 and 4</p>
      <button className={`mt-[5px] w-full h-11 px-3 leading-[13px] ${BUTTON}`}>Transform Centerline to True Bend</button>
    </fieldset>

    <fieldset className="mx-[3px] mt-[7px] border border-[#8c8c8c] rounded-[2px] pb-[27px] px-[9px]">
      <legend className="px-1 -ml-1 leading-4">Around a STRAIGHT</legend>
      <div className="flex justify-end gap-3 pt-[13px] pr-px">
        <label htmlFor="straight" className="pt-2 leading-4">Choose STRAIGHT</label>
        <Spinner id="straight" initial={3} className="w-[68px] h-[39px]" />
      </div>
      <div className="flex justify-end items-center gap-[9px] mt-3 pr-px">
        <span id="axis-label">Choose AXIS</span>
        <div
          role="listbox"
          aria-labelledby="axis-label"
          className="w-[68px] h-[53px] pt-[9px] overflow-hidden border border-[#777] text-center text-xl bg-linear-to-b from-[#3e4650] via-[#a9b9cb] to-[#4b5766]"
        >
          <div role="option" aria-selected="true" className="h-[31px] leading-[28px] border border-[#d0d8e0] bg-[#a4b2c4] text-[#555]">X</div>
          <div role="option" aria-selected="false" className="h-3 overflow-hidden leading-5 text-[#222]">Y</div>
        </div>
      </div>
      <p className="mt-[6px] pl-px leading-4">Centerline Points: 3 and 4</p>
      <button className="mt-[5px] w-full h-12 pt-[2px] border border-[#8a8a8a] rounded-[3px] bg-[linear-gradient(#fff,#c4c4c4_35%,#c0c0c0_70%,#fff)]">
        <span className="px-px outline-1 outline-dotted outline-black">Snap to Axis</span>
      </button>
    </fieldset>

    <div className="flex flex-col gap-[3px] mt-[6px] px-2">
      <button className={`h-[49px] pt-[2px] ${BUTTON}`}>Zoom All</button>
      <button className={`h-[49px] pt-[2px] ${BUTTON}`}>Refresh Drawing</button>
    </div>
  </section>
);

const Splitter = () => (
  <div className="w-1 h-[264px] mt-[263px] bg-[conic-gradient(#777_25%,#f0f0f0_0)] bg-size-[2px_2px]"></div>
);

const App = () => (
  <div className="relative min-h-screen overflow-hidden bg-white text-[13px] text-black font-['DejaVu_Sans_Condensed','Noto_Sans',sans-serif]">
    <Toolbar />

    <div className="flex h-[81px] bg-[#f0f0f0]">
      <div className="w-[606px] shrink-0 pl-px pt-[6px]">
        <input aria-label="Command" className="block w-full h-[34px] bg-white border border-[#8c8c8c] rounded-[4px]" />
        <nav className="flex w-max mt-[7px] ml-[2px] border border-[#c9ced6] text-[15px] bg-linear-to-b from-[#f2f4f7] to-[#dfe3ea]">
          {["File", "Control", "Help"].map((item) => (
            <button key={item} className="px-[6px] h-[26px] leading-6 border-r border-[#c9ced6] last:border-r-0">{item}</button>
          ))}
        </nav>
      </div>
      <p className="flex-1 min-w-0 mt-[3px] mb-px pl-[50px] text-[17px] leading-7 whitespace-nowrap bg-[#dadada] border-t-2 border-t-[#cfcfcf] border-b-4 border-b-[#9a9a9a]">
        View Mode: SELECT, Projection: PARALLEL, Wire Frame: ON, Only UNBENT Tube: OFF, Tube Defining Features: VISIBLE, Auto Zoom: OFF
      </p>
    </div>

    <main className="flex bg-[#f0f0f0]">
      <LeftPanel />
      <div className="w-[9px] shrink-0 flex justify-center"><Splitter /></div>
      <div className="w-[154px] shrink-0 border-l border-[#ccc] border-r border-r-[#3c3c3c] bg-[#b4b4b4]"></div>
      <div className="w-[10px] shrink-0"></div>
      <div className="relative z-10 flex-1 min-w-0"><TubeScene /></div>
      <div className="w-[10px] shrink-0 border-l-2 border-[#3c3c3c] flex justify-center"><Splitter /></div>
      <RightEdge />
    </main>

    <ViewOrientation />
    <div className="absolute inset-0 z-20 pointer-events-none [&>*]:pointer-events-auto">
      <TransformControl />
    </div>
  </div>
);

export default App;
